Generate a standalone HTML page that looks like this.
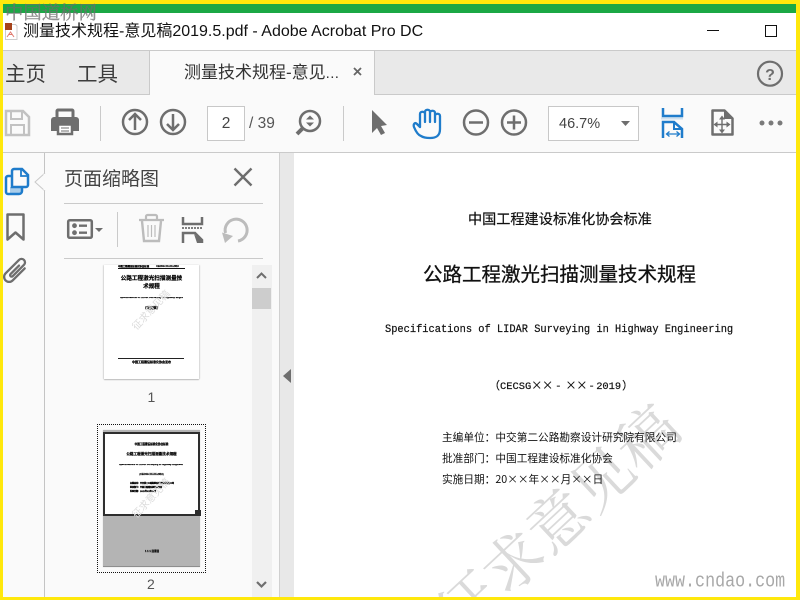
<!DOCTYPE html>
<html lang="zh"><head><meta charset="utf-8"><title>Acrobat</title>
<style>
html,body{margin:0;padding:0;width:800px;height:600px;overflow:hidden;background:#fff}
*{box-sizing:border-box}
.a{position:absolute;white-space:nowrap}
body{font-family:"Liberation Sans","Noto Sans CJK SC",sans-serif;position:relative}
#w{position:absolute;left:0;top:0;width:800px;height:600px;overflow:hidden}
.doc{font-family:"WenQuanYi Zen Hei","Noto Sans CJK SC",sans-serif;color:#111}
.z{font-family:"WenQuanYi Zen Hei","Noto Sans CJK SC",sans-serif}
.t{color:#000;font-weight:bold;-webkit-text-stroke:.2px #000}
svg{position:absolute;left:0;top:0}
</style></head><body><div id="w">
<!-- backgrounds -->
<div class="a" style="left:0;top:13px;width:800px;height:37px;background:#fff"></div>
<div class="a" style="left:0;top:4px;width:800px;height:9px;background:#1ba845"></div>
<div class="a" style="left:0;top:50px;width:800px;height:1px;background:#cacaca"></div>
<div class="a" style="left:0;top:51px;width:800px;height:43px;background:#e9e9e9"></div>
<div class="a" style="left:149px;top:51px;width:226px;height:44px;background:#fafafa;border-left:1px solid #cacaca;border-right:1px solid #cacaca"></div>
<div class="a" style="left:0;top:94px;width:149px;height:1px;background:#cacaca"></div>
<div class="a" style="left:375px;top:94px;width:425px;height:1px;background:#cacaca"></div>
<div class="a" style="left:0;top:95px;width:800px;height:57px;background:#fafafa"></div>
<div class="a" style="left:0;top:152px;width:800px;height:1px;background:#cacaca"></div>
<div class="a" style="left:0;top:153px;width:279px;height:447px;background:#fafafa"></div>
<div class="a" style="left:44px;top:153px;width:1px;height:447px;background:#c4c4c4"></div>
<div class="a" style="left:279px;top:153px;width:15px;height:447px;background:#e8e8e8;border-left:1px solid #d0d0d0"></div>
<div class="a" style="left:294px;top:153px;width:506px;height:447px;background:#fff"></div>

<!-- watermark under the page text -->
<svg width="800" height="600" viewBox="0 0 800 600"><text x="558" y="542" text-anchor="middle" transform="rotate(-43 558 520)" font-family="Noto Serif CJK SC, serif" font-size="60" letter-spacing="1" fill="#dadada">征求意见稿</text></svg>

<!-- title bar -->
<div class="a" style="left:23px;top:21px;font-size:16px;line-height:22px;color:#111;font-family:'Liberation Sans','WenQuanYi Zen Hei','Noto Sans CJK SC',sans-serif">测量技术规程-意见稿2019.5.pdf - Adobe Acrobat Pro DC</div>
<div class="a" style="left:707px;top:30px;width:12px;height:1px;background:#111"></div>
<div class="a" style="left:765px;top:25px;width:12px;height:12px;border:1px solid #111"></div>

<!-- tabs -->
<div class="a z" style="left:5px;top:59px;font-size:20.5px;line-height:26px;color:#3d3d3d">主页</div>
<div class="a z" style="left:77px;top:59px;font-size:20.5px;line-height:26px;color:#3d3d3d">工具</div>
<div class="a" style="left:184px;top:62px;font-size:17px;line-height:22px;color:#333;font-family:'Liberation Sans','WenQuanYi Zen Hei','Noto Sans CJK SC',sans-serif">测量技术规程-意见<span style="font-size:15px;letter-spacing:.4px">...</span></div>

<!-- boxes and text of toolbar -->
<div class="a" style="left:207px;top:106px;width:38px;height:35px;background:#fff;border:1px solid #c8c8c8;text-align:center;font-size:15.5px;line-height:33px;color:#444">2</div>
<div class="a" style="left:249px;top:114px;font-size:15.5px;line-height:20px;color:#555">/ 39</div>
<div class="a" style="left:548px;top:106px;width:91px;height:35px;background:#fff;border:1px solid #c8c8c8"></div>
<div class="a" style="left:559px;top:114px;font-size:14.5px;line-height:20px;color:#444">46.7%</div>

<!-- panel -->
<div class="a z" style="left:64px;top:165px;font-size:19px;line-height:25px;color:#444">页面缩略图</div>
<div class="a" style="left:64px;top:203px;width:199px;height:1px;background:#cacaca"></div>
<div class="a" style="left:64px;top:258px;width:199px;height:1px;background:#cacaca"></div>
<div class="a" style="left:117px;top:212px;width:1px;height:35px;background:#cacaca"></div>
<div class="a" style="left:100px;top:106px;width:1px;height:35px;background:#cacaca"></div>
<div class="a" style="left:343px;top:106px;width:1px;height:35px;background:#cacaca"></div>

<!-- thumb 1 -->
<div class="a" style="left:104px;top:265px;width:95px;height:114px;background:#fff;box-shadow:0 1px 1px #bbb,1px 0 1px #ddd,-1px 0 1px #ddd;overflow:hidden">
  <div class="a" style="left:14px;top:3px;width:67px;height:1px;background:#111"></div>
  <div class="a t" style="left:14px;top:0;width:67px;font-size:2.4px;line-height:3px;overflow:hidden">中国工程建设标准化协会标准　　　CECSG XX-XX-2019</div>
  <div class="a t" style="left:16px;top:10px;width:63px;text-align:center;font-size:5.6px;line-height:8px;white-space:normal">公路工程激光扫描测量技术规程</div>
  <div class="a t" style="left:16px;top:32px;width:63px;height:2px;overflow:hidden;font-size:2.5px;line-height:2px;text-align:center">Specifications of LIDAR Surveying in Highway Engineering</div>
  <div class="a t" style="left:0;top:41px;width:95px;text-align:center;font-size:3.4px;line-height:4px">（意见稿）</div>
  <div class="a" style="left:23px;top:40px;width:50px;text-align:center;font-size:10px;line-height:12px;color:#dcdcdc;transform:rotate(-47deg)">征求意见稿</div>
  <div class="a" style="left:14px;top:92.500px;width:66px;height:1.500px;background:#222"></div>
  <div class="a t" style="left:0;top:95px;width:95px;text-align:center;font-size:3px;line-height:4px">中国工程建设标准化协会发布</div>
</div>
<div class="a" style="left:147.500px;top:388px;font-size:14px;line-height:18px;color:#555">1</div>

<!-- thumb 2 -->
<div class="a" style="left:97px;top:424px;width:109px;height:149px;border:1px dotted #111"></div>
<div class="a" style="left:103px;top:430px;width:97px;height:137px;background:#b4b4b4;box-shadow:0 0 1px #ccc"></div>
<div class="a" style="left:103px;top:432px;width:97px;height:84px;background:#fff;border:2px solid #2e2e2e;overflow:hidden">
  <div class="a t" style="left:0;top:9px;width:93px;text-align:center;font-size:2.6px;line-height:4px">中国工程建设标准化协会标准</div>
  <div class="a t" style="left:0;top:18px;width:93px;text-align:center;font-size:3.6px;line-height:5px">公路工程激光扫描测量技术规程</div>
  <div class="a t" style="left:14px;top:30px;width:64px;height:2px;font-size:2.4px;line-height:2px;text-align:center;overflow:hidden">Specifications of LIDAR Surveying in Highway Engineering</div>
  <div class="a t" style="left:0;top:39px;width:93px;text-align:center;font-size:2.4px;line-height:3px">（CECSG XX-XX-2019）</div>
  <div class="a t" style="left:25px;top:48px;font-size:2px;line-height:4px">主编单位：中交第二公路勘察设计研究院有限公司<br>批准部门：中国工程建设标准化协会<br>实施日期：20XX年XX月XX日</div>
</div>
<div class="a" style="left:127px;top:493px;width:50px;text-align:center;font-size:10px;line-height:12px;color:#dcdcdc;transform:rotate(-47deg)">征求意见稿</div>
<div class="a" style="left:195px;top:510px;width:6px;height:6px;background:#2e2e2e"></div>
<div class="a t" style="left:145px;top:550px;font-size:2.6px;line-height:4px">1 1 1 目录目</div>
<div class="a" style="left:103px;top:566px;width:97px;height:1px;background:#8e8e8e"></div>
<div class="a" style="left:147px;top:575px;font-size:14px;line-height:18px;color:#555">2</div>

<!-- scrollbar -->
<div class="a" style="left:252px;top:265px;width:20px;height:332px;background:#f0f0f0"></div>
<div class="a" style="left:252px;top:288px;width:19px;height:21px;background:#cdcdcd"></div>

<!-- document -->
<div class="a doc" style="left:468px;top:209px;font-size:14.15px;line-height:20px;-webkit-text-stroke:.2px #111">中国工程建设标准化协会标准</div>
<div class="a doc" style="left:423px;top:259px;font-size:19.500px;line-height:27px;-webkit-text-stroke:.3px #111">公路工程激光扫描测量技术规程</div>
<div class="a" style="left:385px;top:322px;font-family:'Liberation Mono',monospace;font-size:10.36px;line-height:17px;color:#111;-webkit-text-stroke:.2px #111;transform:scaleY(1.1);transform-origin:0 50%">Specifications of LIDAR Surveying in Highway Engineering</div>
<div class="a" style="left:489px;top:376px;font-family:'Liberation Mono',monospace;font-size:10.4px;line-height:18px;color:#111;-webkit-text-stroke:.2px #111"><span class="z" style="font-size:11px">（</span>CECSG<span class="z" style="font-size:11px">××</span><span style="margin:0 2px">-</span><span class="z" style="font-size:11px;margin-left:2px">××</span><span style="margin:0 1.500px 0 1px">-</span>2019<span class="z" style="font-size:11px;margin-left:1px">）</span></div>
<div class="a doc" style="left:442px;top:427px;font-size:10.68px;line-height:21px">主编单位：中交第二公路勘察设计研究院有限公司<br>批准部门：中国工程建设标准化协会<br>实施日期：20××年××月××日</div>

<div class="a" style="left:655px;top:572px;font-family:'Liberation Mono',monospace;font-size:16.7px;line-height:18px;color:#a8a8a8;transform:scaleY(1.2);transform-origin:0 0">www.cndao.com</div>

<!-- icons -->
<svg width="800" height="600" viewBox="0 0 800 600" fill="none">
 <!-- pdf file icon -->
 <path d="M5.500 24.500h10l1.500 1.500v13.500h-11.500z" fill="#fff" stroke="#ccc"/>
 <rect x="5" y="23" width="7" height="7" fill="#a5431a"/>
 <path d="M7 37l3.500-5 3.500 5M8.500 34.500h4" stroke="#e07a6f" stroke-width="1"/>
 <!-- tab close -->
 <path d="M354 68l7 7M361 68l-7 7" stroke="#666" stroke-width="1.800"/>
 <!-- help -->
 <circle cx="770" cy="73.700" r="12" stroke="#6e6e6e" stroke-width="2.200"/>
 <text x="770" y="80" text-anchor="middle" font-family="Liberation Sans" font-weight="bold" font-size="16" fill="#6e6e6e">?</text>
 <!-- save -->
 <path d="M6 111h17l6 6v18H6z" stroke="#c2c2c2" stroke-width="2.500"/>
 <path d="M11 111v8h11v-8M11 135v-10h13v10" stroke="#c2c2c2" stroke-width="2"/>
 <!-- print -->
 <path d="M57 117v-6a1 1 0 0 1 1-1h14a1 1 0 0 1 1 1v6" stroke="#6e6e6e" stroke-width="3"/>
 <path d="M54 117h22a3 3 0 0 1 3 3v11h-28v-11a3 3 0 0 1 3-3z" fill="#6e6e6e"/>
 <rect x="58" y="124.500" width="14" height="9.500" fill="#fff" stroke="#6e6e6e" stroke-width="2.500"/>
 <path d="M61 128h8M61 131h8" stroke="#6e6e6e"/>
 <!-- up/down -->
 <circle cx="135" cy="122" r="12" stroke="#6e6e6e" stroke-width="2.500"/>
 <path d="M135 130v-15M129 120l6-6 6 6" stroke="#6e6e6e" stroke-width="2.500"/>
 <circle cx="173" cy="122" r="12" stroke="#6e6e6e" stroke-width="2.500"/>
 <path d="M173 114v15M167 124l6 6 6-6" stroke="#6e6e6e" stroke-width="2.500"/>
 <!-- find zoom -->
 <circle cx="310" cy="121" r="10" stroke="#6e6e6e" stroke-width="2.500"/>
 <path d="M303 128l-6 6" stroke="#6e6e6e" stroke-width="4"/>
 <path d="M306 119.500l4-4 4 4zM306 122.500l4 4 4-4z" fill="#6e6e6e"/>
 <!-- arrow cursor -->
 <path d="M372 110L387 125L381 126L385 133L381 135L377 128L372 133z" fill="#6e6e6e"/>
 <!-- hand -->
 <path d="M421 136c-3-1-5-4-7-9-1-3 1-5 3-3l3 3v-13c0-3 5-3 5 0v8-10c0-3 5-3 5 0v10-9c0-3 5-3 5 0v9-6c0-3 5-3 5 0v13c0 7-4 9-10 9-3 0-6 0-9-2z" stroke="#1f7ccb" stroke-width="2.300" stroke-linejoin="round"/>
 <!-- zoom -/+ -->
 <circle cx="476" cy="122.500" r="12" stroke="#6e6e6e" stroke-width="2.500"/>
 <path d="M469 122.500h14" stroke="#6e6e6e" stroke-width="2.500"/>
 <circle cx="514" cy="122.500" r="12" stroke="#6e6e6e" stroke-width="2.500"/>
 <path d="M507 122.500h14M514 115.500v14" stroke="#6e6e6e" stroke-width="2.500"/>
 <!-- dropdown -->
 <path d="M621 121h9l-4.500 5z" fill="#6e6e6e"/>
 <!-- fit width -->
 <path d="M663 108v8h19v-8" stroke="#1f7ccb" stroke-width="2.500"/>
 <path d="M661 118.500h22" stroke="#cfe0ee" stroke-width="2"/>
 <path d="M663 138v-16h11l8 7v9" stroke="#1f7ccb" stroke-width="2.500"/>
 <path d="M674 122v7h8" stroke="#1f7ccb" stroke-width="2"/>
 <path d="M667 134h12M669.500 131.500l-3 2.500 3 2.500M676.500 131.500l3 2.500-3 2.500" stroke="#1f7ccb" stroke-width="1.300"/>
 <!-- pan zoom page -->
 <path d="M712.500 110.500h12l8 8v16h-20z" stroke="#6e6e6e" stroke-width="2.500" stroke-linejoin="round"/>
 <path d="M724 111v8h8z" fill="#6e6e6e"/>
 <path d="M722 118v13M716 124.500h12" stroke="#6e6e6e" stroke-width="1.400"/>
 <path d="M719 119.500l3-4 3 4zM719 129.500l3 4 3-4zM717.500 121.500l-4 3 4 3zM726.500 121.500l4 3-4 3z" fill="#6e6e6e"/>
 <!-- more -->
 <circle cx="762" cy="123" r="2.500" fill="#7a7a7a"/><circle cx="771" cy="123" r="2.500" fill="#7a7a7a"/><circle cx="780" cy="123" r="2.500" fill="#7a7a7a"/>
 <!-- rail: pages -->
 <path d="M10 187h11v6H10z" fill="#a9cdea"/>
 <path d="M11 176H8a2 2 0 0 0-2 2v14a2 2 0 0 0 2 2h11a3 3 0 0 0 3-3v-3" stroke="#1f7ccb" stroke-width="2.500"/>
 <path d="M12 186V171a2 2 0 0 1 2-2h8l6 6v10a2 2 0 0 1-2 2H12z" stroke="#1f7ccb" stroke-width="2.500" fill="#fafafa"/>
 <path d="M21 169v7h7" stroke="#1f7ccb" stroke-width="1.800"/>
 <!-- panel pointer -->
 <path d="M45 173l-10 9 10 9" fill="#fafafa" stroke="#c9c9c9"/>
 <path d="M44.500 174v16" stroke="#fafafa" stroke-width="2"/>
 <!-- bookmark -->
 <path d="M7.500 214.500h16v25l-8-7-8 7z" stroke="#6e6e6e" stroke-width="2.500" stroke-linejoin="round"/>
 <!-- paperclip -->
 <g transform="translate(15.500 270.500) rotate(45)"><path d="M5-8V9a5 5 0 0 1-10 0V-10a3.500 3.500 0 0 1 7 0V6a1.500 1.500 0 0 1-3 0V-6" stroke="#6e6e6e" stroke-width="2.300" stroke-linecap="round"/></g>
 <!-- panel close -->
 <path d="M234.500 168.500l17 17M251.500 168.500l-17 17" stroke="#6e6e6e" stroke-width="2.400"/>
 <!-- options -->
 <rect x="68.200" y="220.200" width="23.600" height="17.600" rx="1.500" stroke="#6e6e6e" stroke-width="2.500"/>
 <circle cx="74.500" cy="225.700" r="2.400" fill="#6e6e6e"/><circle cx="74.500" cy="232.700" r="2.400" fill="#6e6e6e"/>
 <path d="M79 225.700h8M79 232.700h8" stroke="#6e6e6e" stroke-width="2.400"/>
 <path d="M95 228h8l-4 4z" fill="#6e6e6e"/>
 <!-- trash -->
 <path d="M139 220h25M146 220v-3.500a1.500 1.500 0 0 1 1.500-1.500h8a1.500 1.500 0 0 1 1.500 1.500v3.500" stroke="#bcbcbc" stroke-width="2.200"/>
 <path d="M142 221l2 20h15l2-20" stroke="#bcbcbc" stroke-width="2.400"/>
 <path d="M148 225v12M151.500 225v12M155 225v12" stroke="#bcbcbc" stroke-width="1.200"/>
 <!-- split pages -->
 <path d="M183 217v7h19v-7" stroke="#6e6e6e" stroke-width="2.500"/>
 <path d="M182 228h21" stroke="#6e6e6e" stroke-width="1.800" stroke-dasharray="2 1"/>
 <path d="M183 243v-10h12l7 7v3" stroke="#6e6e6e" stroke-width="2.500"/>
 <path d="M194 234l8 7v2h-5z" fill="#6e6e6e"/>
 <!-- rotate -->
 <path d="M225.500 233A11 11 0 1 1 238 241" stroke="#bcbcbc" stroke-width="3"/>
 <path d="M222 232.500L233 236L225 243z" fill="#bcbcbc"/>
 <!-- scrollbar arrows -->
 <path d="M257 278l4.500-4.500 4.500 4.500" stroke="#6e6e6e" stroke-width="2"/>
 <path d="M257 582l4.500 4.500 4.500-4.500" stroke="#6e6e6e" stroke-width="2.200"/>
 <!-- collapse arrow -->
 <path d="M291 369v14l-8-7z" fill="#6e6e6e"/>
</svg>

<!-- yellow frame -->
<div class="a" style="left:0;top:0;width:800px;height:4px;background:#ffe80c"></div>
<div class="a" style="left:0;top:0;width:3px;height:600px;background:#ffe80c"></div>
<div class="a" style="left:796px;top:0;width:4px;height:600px;background:#ffe80c"></div>
<div class="a" style="left:0;top:597px;width:800px;height:3px;background:#ffe80c"></div>

<!-- site watermark -->
<div class="a" style="left:5px;top:-1px;font-family:'Noto Serif CJK SC',serif;font-size:18.400px;line-height:26px;color:rgba(110,110,110,.7);-webkit-text-stroke:.4px rgba(110,110,110,.7)">中国道桥网</div>
</div></body></html>
